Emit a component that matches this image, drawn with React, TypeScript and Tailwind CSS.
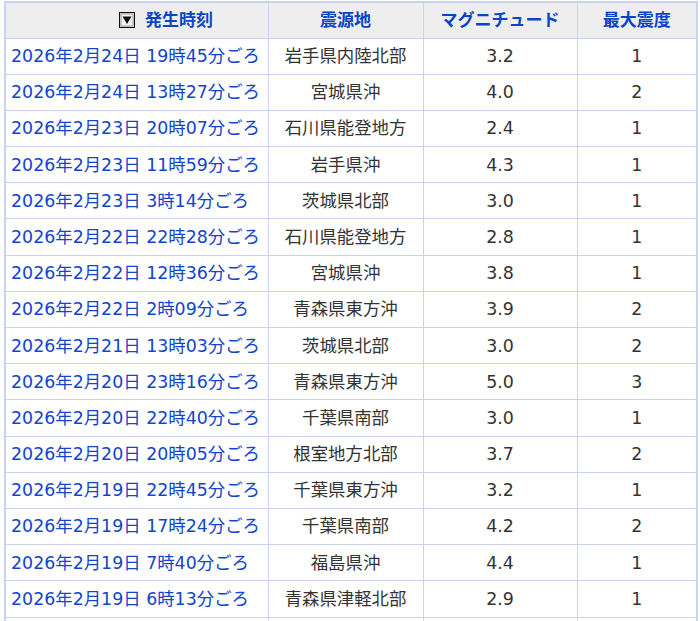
import React from "react";

const rows: [string, string, string, string][] = [
  ["2026年2月24日 19時45分ごろ", "岩手県内陸北部", "3.2", "1"],
  ["2026年2月24日 13時27分ごろ", "宮城県沖", "4.0", "2"],
  ["2026年2月23日 20時07分ごろ", "石川県能登地方", "2.4", "1"],
  ["2026年2月23日 11時59分ごろ", "岩手県沖", "4.3", "1"],
  ["2026年2月23日 3時14分ごろ", "茨城県北部", "3.0", "1"],
  ["2026年2月22日 22時28分ごろ", "石川県能登地方", "2.8", "1"],
  ["2026年2月22日 12時36分ごろ", "宮城県沖", "3.8", "1"],
  ["2026年2月22日 2時09分ごろ", "青森県東方沖", "3.9", "2"],
  ["2026年2月21日 13時03分ごろ", "茨城県北部", "3.0", "2"],
  ["2026年2月20日 23時16分ごろ", "青森県東方沖", "5.0", "3"],
  ["2026年2月20日 22時40分ごろ", "千葉県南部", "3.0", "1"],
  ["2026年2月20日 20時05分ごろ", "根室地方北部", "3.7", "2"],
  ["2026年2月19日 22時45分ごろ", "千葉県東方沖", "3.2", "1"],
  ["2026年2月19日 17時24分ごろ", "千葉県南部", "4.2", "2"],
  ["2026年2月19日 7時40分ごろ", "福島県沖", "4.4", "1"],
  ["2026年2月19日 6時13分ごろ", "青森県津軽北部", "2.9", "1"],
];

function SortIcon() {
  return (
    <svg width="16" height="16" viewBox="0 0 16 16" className="shrink-0">
      <rect x="0.5" y="0.5" width="15" height="15" fill="#e8e8e8" stroke="#111" />
      <rect x="2" y="2" width="12" height="12" fill="#f4f4f4" stroke="#9a9a9a" strokeWidth="1" />
      <path d="M3.5 4.5 L12.5 4.5 L8 12 Z" fill="#111" />
    </svg>
  );
}

export default function App() {
  const font = { fontFamily: '"DejaVu Sans", "Noto Sans CJK JP", sans-serif' };
  return (
    <div className="w-[700px] h-[621px] overflow-hidden bg-white pt-[1px] pl-[4px]" style={font}>
      <table className="table-fixed border-collapse border-2 border-[#c9d2f0] w-[692px]">
        <colgroup>
          <col className="w-[263px]" />
          <col className="w-[155px]" />
          <col className="w-[154px]" />
          <col className="w-[120px]" />
        </colgroup>
        <thead>
          <tr className="h-[36px] bg-[#eeeeee] text-[#0a45c8] text-[17px] font-bold">
            <th className="border border-[#c9d2f0] p-0">
              <div className="flex items-center pl-[113px] gap-[10px]">
                <SortIcon />
                <span>発生時刻</span>
              </div>
            </th>
            <th className="border border-[#c9d2f0] p-0 text-center">震源地</th>
            <th className="border border-[#c9d2f0] p-0 text-center">マグニチュード</th>
            <th className="border border-[#c9d2f0] p-0 text-center">最大震度</th>
          </tr>
        </thead>
        <tbody className="text-[17.4px]">
          {rows.map((r, i) => (
            <tr key={i} className="h-[36.2px]">
              <td className="border border-[#c9d2f0] pl-[5px] pr-0 py-0 text-[#1244cc] whitespace-nowrap">
                {r[0]}
              </td>
              <td className="border border-[#c9d2f0] p-0 text-center text-[#333333]">{r[1]}</td>
              <td className="border border-[#c9d2f0] p-0 text-center text-[#333333]">{r[2]}</td>
              <td className="border border-[#c9d2f0] p-0 text-center text-[#333333]">{r[3]}</td>
            </tr>
          ))}
          <tr className="h-[36.2px]">
            <td className="border border-[#c9d2f0] p-0"></td>
            <td className="border border-[#c9d2f0] p-0"></td>
            <td className="border border-[#c9d2f0] p-0"></td>
            <td className="border border-[#c9d2f0] p-0"></td>
          </tr>
        </tbody>
      </table>
    </div>
  );
}
